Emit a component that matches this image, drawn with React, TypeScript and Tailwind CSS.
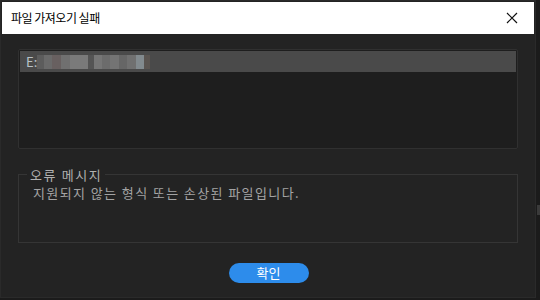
import React from "react"

const blur = [
  { w: 7, c: "#5c5c5c" },
  { w: 8, c: "#6a6a6a" },
  { w: 9, c: "#686060" },
  { w: 9, c: "#707070" },
  { w: 18, c: "#7a7a7a" },
  { w: 6, c: "#545454" },
  { w: 8, c: "#767676" },
  { w: 8, c: "#6c6c6c" },
  { w: 9, c: "#747474" },
  { w: 8, c: "#666666" },
  { w: 9, c: "#707070" },
  { w: 8, c: "#828a8e" },
  { w: 6, c: "#5a5450" },
]

function BlurredPath() {
  return (
    <div className="flex h-[14px] items-stretch">
      {blur.map((b, i) => (
        <div key={i} className="h-full" style={{ width: b.w, background: b.c }} />
      ))}
    </div>
  )
}

export default function App() {
  return (
    <div
      className="relative h-[300px] w-[540px] overflow-hidden bg-[#1b1b1b]"
      style={{ fontFamily: '"Noto Sans CJK KR", "Noto Sans", sans-serif' }}
    >
      <div className="flex h-[298px] w-[536px] flex-col border border-[#2a2a2a] bg-[#232323]">
        {/* title bar */}
        <div className="mx-[1px] mt-[1px] flex h-[32px] items-center justify-between bg-white pl-[9px] pr-[16px]">
          <span className="text-[12px] tracking-[-0.5px] text-black">파일 가져오기 실패</span>
          <svg width="12" height="12" viewBox="0 0 12 12">
            <path d="M1 1 L11 11 M11 1 L1 11" stroke="#111" strokeWidth="1.2" />
          </svg>
        </div>

        {/* list */}
        <div className="mx-[17px] mt-[15px] h-[100px] rounded-[2px] border border-[#303030] bg-[#1e1e1e] px-px pt-px">
          <div className="flex h-[21px] items-center bg-[#4a4a4a] pl-[6px]">
            <span className="text-[13px] text-[#b9c2c8]">E:</span>
            <BlurredPath />
          </div>
        </div>

        {/* error message */}
        <fieldset className="mx-[17px] mt-[19px] h-[75px] border border-[#353535] pb-0 pl-[8px] pr-2">
          <legend className="px-[3px] text-[13px] leading-[13px] tracking-[1.6px] text-[#b0b0b0]">오류 메시지</legend>
          <div className="mt-[5px] pl-[6px] text-[13px] leading-[13px] tracking-[1.4px] text-[#a3a3a3]">
            지원되지 않는 형식 또는 손상된 파일입니다.
          </div>
        </fieldset>

        <div className="mt-[20px] flex justify-center pl-[1px]">
          <button className="flex h-[20px] w-[80px] items-center justify-center rounded-full bg-[#2d8ceb] text-[13px] text-white">
            확인
          </button>
        </div>
      </div>
      <div className="absolute right-0 top-[205px] h-[10px] w-[3px] bg-[#3a3a3a]" />
    </div>
  )
}
